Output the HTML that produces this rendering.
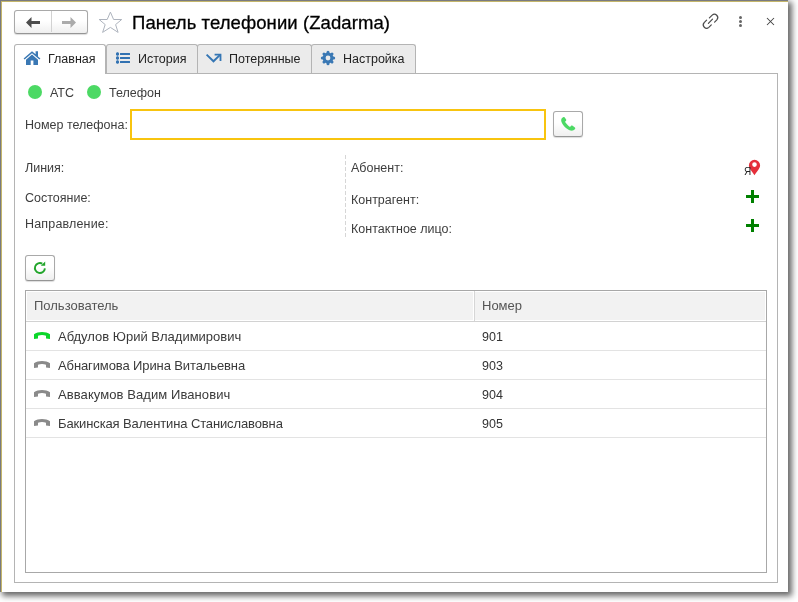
<!DOCTYPE html>
<html><head><meta charset="utf-8">
<style>
*{box-sizing:border-box}
html,body{margin:0;padding:0;background:#fff;width:798px;height:602px;overflow:hidden}
body{font-family:"Liberation Sans",sans-serif;color:#333;position:relative;-webkit-font-smoothing:antialiased}
.a{position:absolute;white-space:nowrap;will-change:transform}
#win{position:absolute;left:0;top:0;width:788px;height:592px;background:#fff;box-shadow:3px 3px 6px 1px rgba(0,0,0,0.6)}
#bl{position:absolute;left:0;top:0;width:1px;height:592px;background:#797a80}
#bt{position:absolute;left:0;top:0;width:788px;height:1px;background:#797a80}
#yl{position:absolute;left:1px;top:1px;width:1px;height:591px;background:#c4b66b}
#yt{position:absolute;left:1px;top:1px;width:787px;height:1px;background:#c4b66b}
.t{font-size:12.5px;line-height:15px;color:#3d3d3d}
.btn{position:absolute;border:1px solid #a9a9a9;border-bottom-color:#959595;box-shadow:0 1px 1px rgba(0,0,0,0.14);border-radius:3px;background:linear-gradient(#fff 0%,#fff 45%,#efefef 100%)}
.tab{position:absolute;top:44px;height:30px;border:1px solid #b4b4b4;border-bottom:none;border-radius:3px 3px 0 0;background:#ebebeb}
</style></head><body>
<div id="win">
<div id="bt"></div><div id="bl"></div><div id="yt"></div><div id="yl"></div>

<!-- nav buttons -->
<div class="btn" style="left:14px;top:10px;width:74px;height:24px"></div>
<div class="a" style="left:51px;top:11px;width:1px;height:21px;background:#d2d2d2"></div>
<svg class="a" style="left:26px;top:17px" width="14" height="11" viewBox="0 0 14 11"><path d="M0 5.5 L5.5 0 L5.5 4 L14 4 L14 7 L5.5 7 L5.5 11 Z" fill="#4d4d4d"/></svg>
<svg class="a" style="left:62px;top:17px" width="14" height="11" viewBox="0 0 14 11"><path d="M14 5.5 L8.5 0 L8.5 4 L0 4 L0 7 L8.5 7 L8.5 11 Z" fill="#ababab"/></svg>

<!-- star -->
<svg class="a" style="left:97px;top:10px" width="27" height="25" viewBox="97 10 27 25"><path d="M110.4 12.1 L113.6 19.5 L121.7 19.5 L115.6 24.6 L118.1 32.4 L110.4 27.4 L102.6 32.4 L105.2 24.6 L99.2 19.5 L107.2 19.5 Z" fill="none" stroke="#adb3bd" stroke-width="1" stroke-linejoin="miter"/></svg>

<!-- title -->
<div class="a" style="left:132px;top:11px;font-size:18.5px;line-height:24px;color:#000;letter-spacing:0.08px;-webkit-text-stroke:0.3px #000">Панель телефонии (Zadarma)</div>

<!-- link icon -->
<svg class="a" style="left:700px;top:11px" width="21" height="21" viewBox="0 0 21 21"><g fill="none" stroke="#4a4a4a" stroke-width="1.2" stroke-linecap="round"><path d="M9.4 6.9 L12.17 4.17 A3.3 3.3 0 0 1 16.83 8.83 L14.6 11.06"/><path d="M6.6 9.2 L4.17 11.67 A3.3 3.3 0 0 0 8.83 16.33 L11.3 13.86"/><path d="M8.4 12.4 L12.5 8.2"/></g></svg>
<!-- dots -->
<div class="a" style="left:738.8px;top:15.9px;width:3px;height:3px;border-radius:50%;background:#666"></div>
<div class="a" style="left:738.8px;top:20px;width:3px;height:3px;border-radius:50%;background:#666"></div>
<div class="a" style="left:738.8px;top:24.2px;width:3px;height:3px;border-radius:50%;background:#666"></div>
<!-- close -->
<svg class="a" style="left:766px;top:17px" width="9" height="9" viewBox="0 0 9 9"><path d="M1 1 L8 8 M8 1 L1 8" stroke="#444" stroke-width="1.05"/></svg>

<!-- tabs -->
<div class="tab" style="left:106px;width:92px"></div>
<div class="tab" style="left:197px;width:115px"></div>
<div class="tab" style="left:311px;width:105px"></div>
<div class="tab" style="left:14px;width:92px;background:#fff;height:30px;z-index:2"></div>

<!-- panel -->
<div class="a" style="left:14px;top:73px;width:764px;height:510px;border:1px solid #b4b4b4"></div>

<!-- tab icons -->
<svg class="a" style="left:22px;top:50px;z-index:3" width="20" height="16" viewBox="0 0 20 16"><path d="M10 1.2 L1.6 8.6 L2.6 9.6 L10 3.2 L17.4 9.6 L18.4 8.6 L16 6.4 L16 1.2 L13.6 1.2 L13.6 4.3 Z" fill="#3a78b4"/><path d="M10 4.6 L4 9.8 L4 15 L8.7 15 L8.7 10.6 L11.4 10.6 L11.4 15 L16 15 L16 9.8 Z" fill="#3a78b4"/></svg>
<div class="a t" style="left:48px;top:52px;z-index:3;color:#222">Главная</div>

<svg class="a" style="left:114px;top:51px" width="18" height="14" viewBox="0 0 18 14"><g fill="#3272b2"><rect x="3" y="1" width="1" height="12" fill-opacity="0.5"/><rect x="2" y="1.6" width="3" height="3" rx="0.8"/><rect x="2" y="5.6" width="3" height="3" rx="0.8"/><rect x="2" y="9.6" width="3" height="3" rx="0.8"/><rect x="6" y="2" width="10" height="2" rx="0.3"/><rect x="6" y="6" width="10" height="2" rx="0.3"/><rect x="6" y="10" width="10" height="2" rx="0.3"/></g></svg>
<div class="a t" style="left:138px;top:52px;color:#222">История</div>

<svg class="a" style="left:202px;top:48px" width="24" height="20" viewBox="0 0 24 20"><path d="M4.6 6.6 L11.5 13.3 L18.3 6.6" fill="none" stroke="#3576b4" stroke-width="1.9"/><path d="M12.6 6.7 L18.5 6.7 L18.5 12.9" fill="none" stroke="#3576b4" stroke-width="1.8" stroke-linejoin="miter"/></svg>
<div class="a t" style="left:229px;top:52px;color:#222">Потерянные</div>

<svg class="a" style="left:319px;top:49px" width="18" height="18" viewBox="0 0 18 18"><g fill="#3a78b4"><circle cx="9" cy="9" r="5.4"/><g stroke="#3a78b4" stroke-width="3" stroke-linecap="round"><path d="M9 3.3 V14.7 M3.3 9 H14.7 M4.97 4.97 L13.03 13.03 M13.03 4.97 L4.97 13.03"/></g></g><circle cx="9" cy="9" r="2.4" fill="#ebebeb"/></svg>
<div class="a t" style="left:343px;top:52px;color:#222">Настройка</div>

<!-- status indicators -->
<div class="a" style="left:27.9px;top:84.7px;width:14.3px;height:14.3px;border-radius:50%;background:#4cd964"></div>
<div class="a t" style="left:50px;top:86px">АТС</div>
<div class="a" style="left:86.9px;top:84.7px;width:14.3px;height:14.3px;border-radius:50%;background:#4cd964"></div>
<div class="a t" style="left:109px;top:86px">Телефон</div>

<!-- phone input -->
<div class="a t" style="left:25px;top:118px">Номер телефона:</div>
<div class="a" style="left:130px;top:109px;width:416px;height:31px;border:2px solid #f8c40f;background:#fff"></div>
<div class="btn" style="left:553px;top:111px;width:30px;height:26px"></div>
<svg class="a" style="left:560px;top:116px" width="17" height="16" viewBox="0 0 17 16"><path d="M3.2 1.2 C2 1.8 0.9 3 1.2 5 C1.8 8.5 6.5 13.5 10.5 14.5 C12.5 15 13.8 14.2 15 13 C15.5 12.4 15.3 11.8 14.6 11.3 L12.6 9.8 C12 9.4 11.4 9.5 10.9 10 L10 10.9 C8.3 10 5.8 7.4 5 5.8 L5.9 4.9 C6.4 4.4 6.4 3.7 6 3.2 L4.7 1.5 C4.3 1 3.7 0.9 3.2 1.2 Z" fill="#4cd964"/></svg>

<!-- fields -->
<div class="a t" style="left:25px;top:161px">Линия:</div>
<div class="a t" style="left:25px;top:191px">Состояние:</div>
<div class="a t" style="left:25px;top:217px;letter-spacing:0.17px">Направление:</div>
<div class="a" style="left:345px;top:155px;width:1px;height:83px;background:repeating-linear-gradient(#d6d6d6 0 4px,transparent 4px 6px)"></div>
<div class="a t" style="left:351px;top:161px">Абонент:</div>
<div class="a t" style="left:351px;top:193px">Контрагент:</div>
<div class="a t" style="left:351px;top:222px">Контактное лицо:</div>

<!-- yandex pin -->

<svg class="a" style="left:748px;top:158px" width="13" height="18" viewBox="0 0 13 18"><path d="M6.5 1.8 A5.6 5.6 0 0 1 12.1 7.4 C12.1 10.5 8.5 13.5 6.5 17.2 C4.5 13.5 0.9 10.5 0.9 7.4 A5.6 5.6 0 0 1 6.5 1.8 Z M6.5 4.3 A2.3 2.3 0 1 0 6.5 8.9 A2.3 2.3 0 1 0 6.5 4.3 Z" fill="#e52f3b" fill-rule="evenodd"/></svg>
<div class="a" style="left:743.8px;top:165px;font-size:10px;line-height:14px;color:#222">Я</div>
<!-- plus icons -->
<div class="a" style="left:746px;top:195px;width:13px;height:3px;background:#008000"></div>
<div class="a" style="left:751px;top:190px;width:3px;height:13px;background:#008000"></div>
<div class="a" style="left:746px;top:224px;width:13px;height:3px;background:#008000"></div>
<div class="a" style="left:751px;top:219px;width:3px;height:13px;background:#008000"></div>

<!-- refresh -->
<div class="btn" style="left:25px;top:255px;width:30px;height:26px"></div>
<svg class="a" style="left:33px;top:261px" width="14" height="14" viewBox="0 0 14 14"><path d="M11.9 7.4 A5 5 0 1 1 9.3 2.6" fill="none" stroke="#22a52b" stroke-width="1.9"/><path d="M7.8 4.8 L12.2 4.8 L12.2 0.6 Z" fill="#22a52b"/></svg>

<!-- table -->
<div class="a" style="left:25px;top:290px;width:742px;height:283px;border:1px solid #a8a8a8"></div>
<div class="a" style="left:27px;top:292px;width:738px;height:28px;background:#f2f2f2"></div>
<div class="a" style="left:26px;top:321px;width:740px;height:1px;background:#d2d2d2"></div>
<div class="a" style="left:473px;top:291px;width:1px;height:30px;background:#fff"></div><div class="a" style="left:474px;top:291px;width:1px;height:30px;background:#d6d6d6"></div>
<div class="a" style="left:26px;top:350px;width:740px;height:1px;background:#e3e3e3"></div>
<div class="a" style="left:26px;top:379px;width:740px;height:1px;background:#e3e3e3"></div>
<div class="a" style="left:26px;top:408px;width:740px;height:1px;background:#e3e3e3"></div>
<div class="a" style="left:26px;top:437px;width:740px;height:1px;background:#e3e3e3"></div>

<div class="a" style="left:34px;top:298px;font-size:13px;line-height:15px;color:#555">Пользователь</div>
<div class="a" style="left:482px;top:298px;font-size:13px;line-height:15px;color:#555">Номер</div>

<svg class="a" style="left:33px;top:330px" width="18" height="11" viewBox="0 0 18 11"><path d="M1 4.3 C5 1.2 13 1.2 17 4.3 L17 9 L13 8.6 L13 5.8 C10.5 4.8 7.5 4.8 5 5.8 L5 8.6 L1 9 Z" fill="#0bd62a"/></svg>
<svg class="a" style="left:33px;top:359px" width="18" height="11" viewBox="0 0 18 11"><path d="M1 4.3 C5 1.2 13 1.2 17 4.3 L17 9 L13 8.6 L13 5.8 C10.5 4.8 7.5 4.8 5 5.8 L5 8.6 L1 9 Z" fill="#8a8a8a"/></svg>
<svg class="a" style="left:33px;top:388px" width="18" height="11" viewBox="0 0 18 11"><path d="M1 4.3 C5 1.2 13 1.2 17 4.3 L17 9 L13 8.6 L13 5.8 C10.5 4.8 7.5 4.8 5 5.8 L5 8.6 L1 9 Z" fill="#8a8a8a"/></svg>
<svg class="a" style="left:33px;top:417px" width="18" height="11" viewBox="0 0 18 11"><path d="M1 4.3 C5 1.2 13 1.2 17 4.3 L17 9 L13 8.6 L13 5.8 C10.5 4.8 7.5 4.8 5 5.8 L5 8.6 L1 9 Z" fill="#8a8a8a"/></svg>

<div class="a" style="left:58px;top:329px;font-size:13px;line-height:15px;color:#3a3a3a">Абдулов Юрий Владимирович</div>
<div class="a" style="left:58px;top:358px;font-size:13px;line-height:15px;color:#3a3a3a;letter-spacing:-0.11px">Абнагимова Ирина Витальевна</div>
<div class="a" style="left:58px;top:387px;font-size:13px;line-height:15px;color:#3a3a3a;letter-spacing:0.08px">Аввакумов Вадим Иванович</div>
<div class="a" style="left:58px;top:416px;font-size:13px;line-height:15px;color:#3a3a3a;letter-spacing:-0.125px">Бакинская Валентина Станиславовна</div>
<div class="a" style="left:482px;top:330px;font-size:12.5px;line-height:15px;color:#333">901</div>
<div class="a" style="left:482px;top:359px;font-size:12.5px;line-height:15px;color:#333">903</div>
<div class="a" style="left:482px;top:388px;font-size:12.5px;line-height:15px;color:#333">904</div>
<div class="a" style="left:482px;top:417px;font-size:12.5px;line-height:15px;color:#333">905</div>

</div>
</body></html>
